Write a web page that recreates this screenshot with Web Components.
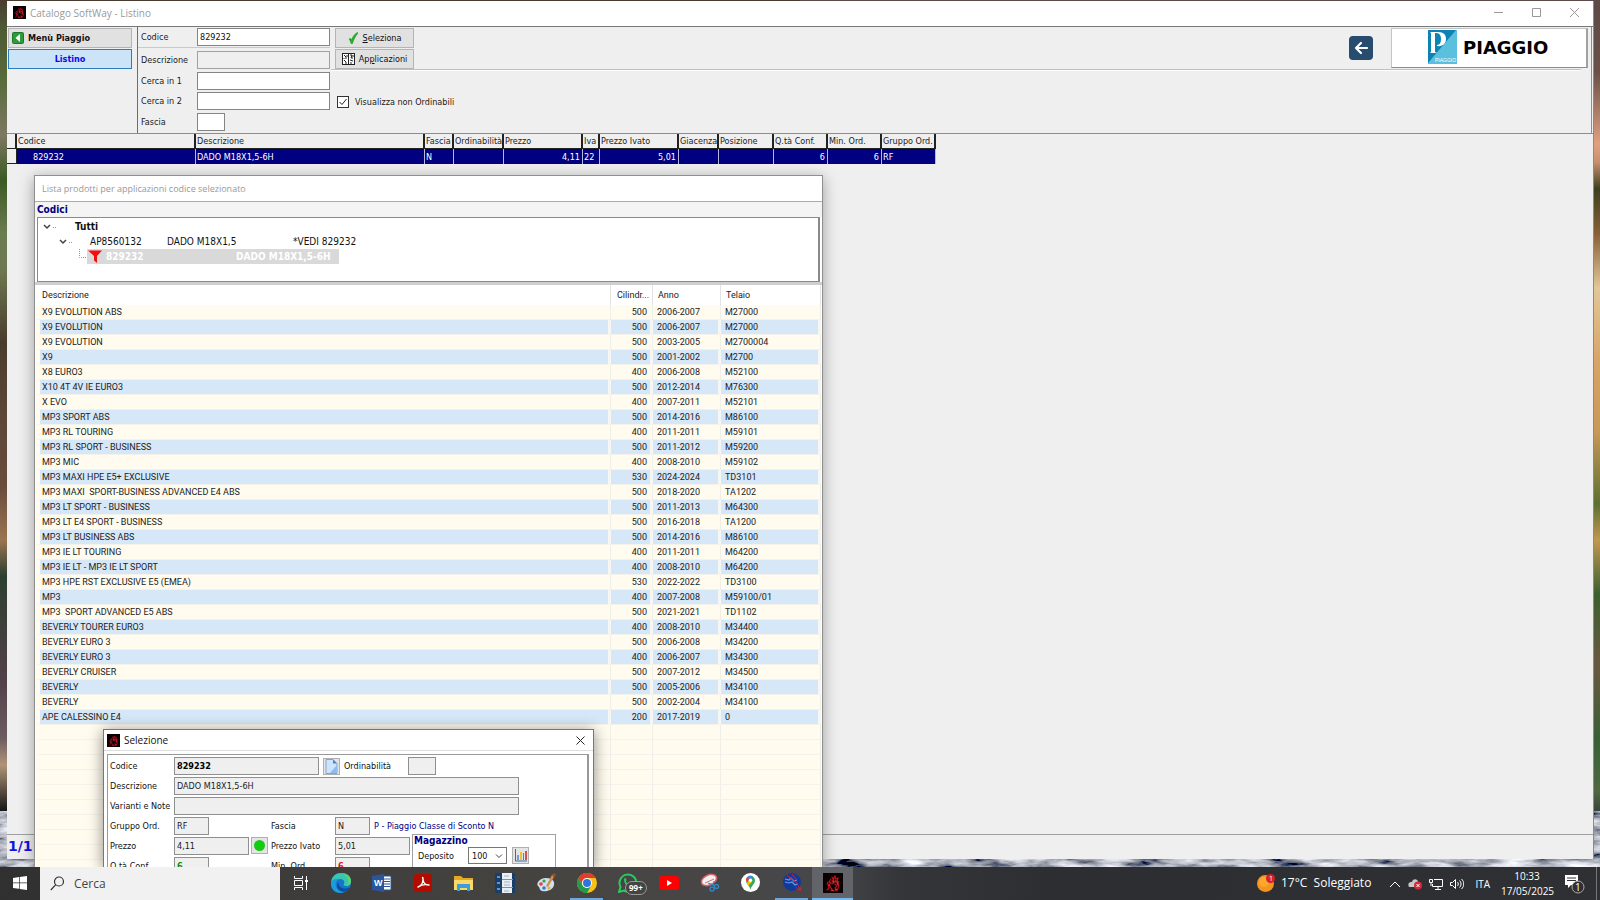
<!DOCTYPE html>
<html lang="it">
<head>
<meta charset="utf-8">
<title>Catalogo SoftWay - Listino</title>
<style>
  html, body { height: 100%; margin: 0; }
  body { overflow: hidden; }
</style>
</head>
<body>
<desk-top></desk-top>

<script>
const define = (name, markup, setup) => {
  const template = document.createElement('template');
  template.innerHTML = markup;
  customElements.define(name, class extends HTMLElement {
    constructor() {
      super();
      const root = this.attachShadow({ mode: 'open' });
      root.append(template.content.cloneNode(true));
      if (setup) setup(root, this);
    }
  });
};

/* Red flame emblem of the program */
define('app-emblem', `
<style>
  :host { display: block; width: 13px; height: 13px; flex: none; }
  svg { display: block; width: 100%; height: 100%; }
</style>
<svg viewBox="0 0 20 20" fill="none" stroke="#c8141c" stroke-width="1.100" stroke-linecap="round">
  <rect width="20" height="20" fill="#080002" stroke="none"/>
  <path d="M9 4l1 2 2-3 1 3 2-1-1 3 2 1M8 6l-2 3 2 1-3 2 1 3-2 2M12 7l3 3 1 4-2 3M9 8l2 1-2 2M12 11l2 2-2 2 1 3M7 14l2 2-1 2M5 9l-1 2M11 5l-1 3 3 1"/>
  <path d="M10 8l1 2M14 9l1 3M6 12l1 1M13 16l1 1M9 17l2 1" stroke="#ee3030"/>
</svg>`);

/* ---------- Menu column, search form and logo ---------- */
define('tool-bar', `
<style>
  :host { display: flex; height: 106px; flex: none; border-bottom: 1px solid #8c8c8c; font-size: 9px; }
  nav { width: 131px; flex: none; border-right: 1px solid #6d6d6d; padding: 1px 5px 0 1px; box-sizing: border-box; display: flex; flex-direction: column; gap: 1px; }
  button { font: inherit; color: #111; background: #e1e1e1; border: 1px solid #b4b4b4; padding: 0; height: 20px; box-sizing: border-box; display: flex; align-items: center; }
  nav button { font-weight: bold; }
  .back { padding-left: 3px; gap: 4px; }
  .now { justify-content: center; background: #cce4f7; border-color: #2c7cc0; color: #0a0af0; }
  .main { flex: 1; display: flex; margin-right: 1px; border-right: 1px solid #8c8c8c; }
  .fields { width: 193px; box-sizing: border-box; flex: none; display: grid; grid-template-columns: 56px 133px; grid-template-rows: 21px 24px 18px 22px 20px; padding-left: 3px; align-items: center; }
  .code { grid-column: 1 / -1; display: grid; grid-template-columns: subgrid; align-items: center; height: 21px; border-bottom: 1px solid #c9c9c9; margin-left: -3px; padding-left: 3px; box-sizing: border-box; }
  label { white-space: nowrap; }
  input[type=text] { font: inherit; color: #111; width: 100%; height: 18px; box-sizing: border-box; border: 1px solid #858585; background: #fff; padding: 0 2px; outline: 0; }
  input[type=text][readonly] { background: #efefef; border-color: #a0a0a0; }
  input[type=text].small { width: 28px; }
  .right { flex: 1; display: flex; flex-direction: column; min-width: 0; }
  .top { height: 43px; box-sizing: border-box; display: flex; margin-right: 10px; border-bottom: 1px solid #c0c0c0; box-shadow: 0 1px #fff; }
  .acts { display: flex; flex-direction: column; gap: 1px; padding: 1px 0 0 4px; }
  .acts button { width: 79px; justify-content: center; gap: 4px; }
  .grow { flex: 1; }
  .exit { align-self: center; width: 24px; height: 24px; background: #284c6e; border: 0; border-radius: 4px; justify-content: center; margin-right: 18px; }
  .logo { width: 197px; height: 40px; flex: none; margin: 1px -7px 0 0; box-sizing: border-box; background: #fff; border: 1px solid #c4c4c4; border-right: 2px solid #a0a0a0; border-bottom-color: #8c8c8c; display: flex; align-items: center; gap: 6px; padding-left: 36px; padding-bottom: 2px; font-size: 18px; font-weight: bold; font-family: "DejaVu Sans", sans-serif; color: #000; }
  .chk { display: flex; align-items: center; gap: 6px; padding: 26px 0 0 6px; }
  .chk input { appearance: none; width: 12px; height: 12px; margin: 0; border: 1px solid #333; background: #fff url('data:image/svg+xml,<svg xmlns="http://www.w3.org/2000/svg" viewBox="0 0 10 10"><path d="M1.5 5l2.500 2.500 4.500-5.500" fill="none" stroke="%23222"/></svg>'); box-sizing: border-box; }
  svg { display: block; flex: none; }
</style>
<nav>
  <button class="back"><svg width="12" height="12" viewBox="0 0 12 12"><rect x=".5" y=".5" width="11" height="11" rx="1" fill="#2f9a3b" stroke="#1b7a2a"/><path d="M8 2v8L3.500 6z" fill="#fff"/></svg>Menù Piaggio</button>
  <button class="now">Listino</button>
</nav>
<div class="main">
  <div class="fields">
    <div class="code"><label for="cod">Codice</label><input type="text" id="cod" value="829232"></div>
    <label for="des">Descrizione</label><input type="text" id="des" readonly>
    <label for="c1">Cerca in 1</label><input type="text" id="c1">
    <label for="c2">Cerca in 2</label><input type="text" id="c2">
    <label for="fas">Fascia</label><input type="text" id="fas" class="small">
  </div>
  <div class="right">
    <div class="top">
      <div class="acts">
        <button><svg width="11" height="12" viewBox="0 0 11 12"><path d="M1 7c1-1 2-.5 2.500 1C5 4 7 1.500 9.500.500L10 1C7.500 4 5.500 8 4.500 11.500H3C2.500 9.500 2 8 1 7z" fill="#22b422" stroke="#118a11" stroke-width=".5"/></svg><span><u>S</u>eleziona</span></button>
        <button><svg width="13" height="12" viewBox="0 0 13 12"><rect x=".5" y=".5" width="12" height="11" fill="#fff" stroke="#222"/><path d="M6.500 0v12M2 2l2 2M3 5h2M2 7l2 2M5 2v2M8 2h2l-1 3h2M8 7l3 1M9 9v2M3 10h2M11 2v2M2 5v1" stroke="#222" fill="none"/></svg><span>Ap<u>p</u>licazioni</span></button>
      </div>
      <div class="grow"></div>
      <button class="exit" aria-label="Indietro"><svg width="16" height="16" viewBox="0 0 16 16"><path d="M14 8H3M8 3L3 8l5 5" fill="none" stroke="#fff" stroke-width="2.200" stroke-linecap="round" stroke-linejoin="round"/></svg></button>
      <div class="logo">
        <svg width="29" height="34" viewBox="0 0 29 34"><path d="M0 0h29v34H0z" fill="#5bc0de"/><path d="M0 0h28L0 33z" fill="#0b83b5"/><path d="M2 2h8c6 0 8 3 8 7s-3 8-9 7v-1c3 0 4-3 4-6s-1-6-5-6H7v19l2 1H2l1-1V3z" fill="#fff"/><text x="7" y="32" font-family="Liberation Sans, sans-serif" font-size="5" font-weight="normal" fill="#fff">PIAGGIO</text></svg>
        <span>PIAGGIO</span>
      </div>
    </div>
    <label class="chk"><input type="checkbox" checked>Visualizza non Ordinabili</label>
  </div>
</div>`);

/* ---------- Price list ---------- */
define('price-list', `
<style>
  :host { display: block; font-size: 9px; }
  table { border-collapse: separate; border-spacing: 0; table-layout: fixed; width: 929px; }
  th, td { height: 15px; padding: 0 2px 0 1px; box-sizing: border-box; font-weight: normal; text-align: left; white-space: nowrap; overflow: hidden; line-height: 14px; }
  th { border-right: 2px solid #222; border-bottom: 1px solid #222; color: #222; padding-top: 1px; line-height: 13px; }
  td { background: #000080; color: #fff; border-right: 1px solid #b8b8dc; }
  td.mark { background: #efefef; border-right: 1px solid #222; border-bottom: 1px solid #222; }
  td.first { padding-left: 16px; }
  .n { text-align: right; }
</style>
<table>
  <colgroup><col style="width:10px"><col style="width:179px"><col style="width:229px"><col style="width:29px"><col style="width:50px"><col style="width:79px"><col style="width:17px"><col style="width:79px"><col style="width:40px"><col style="width:55px"><col style="width:54px"><col style="width:54px"><col style="width:54px"></colgroup>
  <tr><th></th><th>Codice</th><th>Descrizione</th><th>Fascia</th><th>Ordinabilità</th><th>Prezzo</th><th>Iva</th><th>Prezzo Ivato</th><th>Giacenza</th><th>Posizione</th><th>Q.tà Conf.</th><th>Min. Ord.</th><th>Gruppo Ord.</th></tr>
  <tr><td class="mark"></td><td class="first">829232</td><td>DADO M18X1,5-6H</td><td>N</td><td></td><td class="n">4,11</td><td>22</td><td class="n">5,01</td><td></td><td></td><td class="n">6</td><td class="n">6</td><td>RF</td></tr>
</table>`);

define('catalog-window', `
<style>
  :host { display: flex; flex-direction: column; background: #efefef; border-right: 1px solid #8a8a8a; box-sizing: border-box; color: #1a1a1a; font-family: "DejaVu Sans Condensed", "DejaVu Sans", sans-serif; }
  header { height: 26px; box-sizing: border-box; flex: none; background: #fff; border-bottom: 1px solid #777; display: flex; align-items: center; gap: 4px; padding: 0 0 2px 6px; font: 10px "Open Sans", sans-serif; color: #9a9a9a; }
  h1 { font: inherit; margin: 0; flex: 1; }
  .caps { display: flex; gap: 27px; padding-right: 13px; }
  .caps button { border: 0; background: none; padding: 0; width: 11px; height: 11px; }
  svg { display: block; }
  .rest { flex: 1; }
  footer { height: 25px; box-sizing: border-box; border-top: 1px solid #a0a0a0; color: #1414dc; font: bold 14px/22px "DejaVu Sans", sans-serif; padding-left: 1px; }
</style>
<header><app-emblem></app-emblem><h1>Catalogo SoftWay - Listino</h1>
  <div class="caps">
    <button aria-label="Riduci"><svg width="11" height="11"><path d="M1 5.500h9" stroke="#999"/></svg></button>
    <button aria-label="Ingrandisci"><svg width="11" height="11"><path d="M1.500 1.500h8v8h-8z" stroke="#999" fill="none"/></svg></button>
    <button aria-label="Chiudi"><svg width="11" height="11"><path d="M1 1l9 9M10 1l-9 9" stroke="#999"/></svg></button>
  </div>
</header>
<tool-bar></tool-bar>
<price-list></price-list>
<div class="rest"></div>
<footer>1/1</footer>`);

/* ---------- Code tree ---------- */
define('code-tree', `
<style>
  :host { display: block; box-sizing: border-box; height: 65px; margin: 0 2px 0 2px; background: #fff; border: 1px solid #8a8a8a; border-right-width: 2px; font-size: 10px; color: #111; }
  .row { display: flex; align-items: center; height: 15px; line-height: 15px; white-space: nowrap; }
  .one { padding-left: 4px; gap: 17px; margin-top: 1px; }
  .two { padding-left: 20px; gap: 16px; }
  .three { padding-left: 41px; }
  b { font-weight: bold; }
  .cols { display: grid; grid-template-columns: 77px 126px auto; }
  .sel { background: #d9d9d9; color: #fff; font-weight: bold; width: 252px; display: grid; grid-template-columns: 19px 130px auto; align-items: center; }
  svg { display: block; flex: none; }
</style>
<div class="row one"><svg width="16" height="10"><path d="M2 3l3 3 3-3" stroke="#444" stroke-width="1.500" fill="none"/><path d="M11 5.500h4" stroke="#999" stroke-dasharray="1 1"/></svg><b>Tutti</b></div>
<div class="row two"><svg width="16" height="10"><path d="M2 3l3 3 3-3" stroke="#444" stroke-width="1.500" fill="none"/><path d="M11 5.500h3" stroke="#999" stroke-dasharray="1 1"/></svg><div class="cols"><span>AP8560132</span><span>DADO M18X1,5</span><span>*VEDI 829232</span></div></div>
<div class="row three"><svg width="8" height="15"><path d="M.5 0v8.500h8" stroke="#999" fill="none" stroke-dasharray="1 1"/></svg><div class="sel"><svg width="15" height="15" viewBox="0 0 15 15"><path d="M1 1.500h14L10 7v7L7 11.500V7z" fill="#f01010"/></svg><span>829232</span><span>DADO M18X1,5-6H</span></div></div>`);

/* ---------- Vehicles that use the selected code ---------- */
const vehicles = [
  ['X9 EVOLUTION ABS','500','2006-2007','M27000'],
  ['X9 EVOLUTION','500','2006-2007','M27000'],
  ['X9 EVOLUTION','500','2003-2005','M2700004'],
  ['X9','500','2001-2002','M2700'],
  ['X8 EURO3','400','2006-2008','M52100'],
  ['X10 4T 4V IE EURO3','500','2012-2014','M76300'],
  ['X EVO','400','2007-2011','M52101'],
  ['MP3 SPORT ABS','500','2014-2016','M86100'],
  ['MP3 RL TOURING','400','2011-2011','M59101'],
  ['MP3 RL SPORT - BUSINESS','500','2011-2012','M59200'],
  ['MP3 MIC','400','2008-2010','M59102'],
  ['MP3 MAXI HPE E5+ EXCLUSIVE','530','2024-2024','TD3101'],
  ['MP3 MAXI  SPORT-BUSINESS ADVANCED E4 ABS','500','2018-2020','TA1202'],
  ['MP3 LT SPORT - BUSINESS','500','2011-2013','M64300'],
  ['MP3 LT E4 SPORT - BUSINESS','500','2016-2018','TA1200'],
  ['MP3 LT BUSINESS ABS','500','2014-2016','M86100'],
  ['MP3 IE LT TOURING','400','2011-2011','M64200'],
  ['MP3 IE LT - MP3 IE LT SPORT','400','2008-2010','M64200'],
  ['MP3 HPE RST EXCLUSIVE E5 (EMEA)','530','2022-2022','TD3100'],
  ['MP3','400','2007-2008','M59100/01'],
  ['MP3  SPORT ADVANCED E5 ABS','500','2021-2021','TD1102'],
  ['BEVERLY TOURER EURO3','400','2008-2010','M34400'],
  ['BEVERLY EURO 3','500','2006-2008','M34200'],
  ['BEVERLY EURO 3','400','2006-2007','M34300'],
  ['BEVERLY CRUISER','500','2007-2012','M34500'],
  ['BEVERLY','500','2005-2006','M34100'],
  ['BEVERLY','500','2002-2004','M34100'],
  ['APE CALESSINO E4','200','2017-2019','0'],
];

define('vehicle-table', `
<style>
  :host { display: block; background: #fffbef; font: 9px Roboto, sans-serif; color: #222; overflow: hidden; }
  table { width: 100%; table-layout: fixed; border-collapse: separate; border-spacing: 0; }
  th { height: 20px; background: #fff; font-weight: normal; text-align: left; padding: 0 0 0 5px; border-right: 1px solid #e2e2e2; }
  td { height: 15px; box-sizing: border-box; padding: 0 0 0 4px; white-space: pre; border-right: 1px solid #efefe8; border-bottom: 1px solid #f4f2ea; background-clip: padding-box; line-height: 14px; }
  th:first-child { padding-left: 6px; }
  td:first-child { padding-left: 2px; border-left: 4px solid #fffbef; }
  td:nth-child(2) { text-align: right; padding-right: 5px; }
  th:nth-child(2) { padding-left: 6px; }
  tr.alt td { background: #d6e7f7; border-right: 3px solid #f6f7f2; }
  tr.alt td:nth-child(2) { padding-right: 3px; }
</style>
<table>
  <colgroup><col><col style="width:42px"><col style="width:68px"><col style="width:100px"></colgroup>
  <thead><tr><th>Descrizione</th><th>Cilindr...</th><th>Anno</th><th>Telaio</th></tr></thead>
  <tbody></tbody>
</table>`, root => {
  const body = root.querySelector('tbody');
  const addRow = (cells, alt) => {
    const tr = body.insertRow();
    if (alt) tr.className = 'alt';
    cells.forEach(text => { tr.insertCell().textContent = text; });
  };
  vehicles.forEach((v, i) => addRow(v, i % 2 === 1));
  for (let i = 0; i < 10; i++) addRow(['', '', '', ''], false);
});

define('applications-window', `
<style>
  :host { display: flex; flex-direction: column; background: #fff; border: 1px solid #8f8f8f; border-bottom: 0; box-sizing: border-box; box-shadow: 0 3px 14px rgba(0,0,0,.35); color: #1a1a1a; font-family: "DejaVu Sans Condensed", "DejaVu Sans", sans-serif; }
  h2 { margin: 0; height: 25px; padding-left: 7px; font: 9px/25px "Open Sans", sans-serif; color: #999; flex: none; border-bottom: 1px solid #aaa; }
  h3 { margin: 0; background: #f4f4f4; color: #000080; font-size: 10px; line-height: 16px; height: 15px; padding-left: 2px; flex: none; }
  .split { height: 3px; flex: none; background: #cfcfcf; }
  vehicle-table { flex: 1; min-height: 0; margin-left: 1px; margin-right: 1px; }
</style>
<h2>Lista prodotti per applicazioni codice selezionato</h2>
<h3>Codici</h3>
<code-tree></code-tree>
<div class="split"></div>
<vehicle-table></vehicle-table>`);

/* ---------- Selection dialog ---------- */
define('selection-dialog', `
<style>
  :host { display: flex; flex-direction: column; background: #fff; border: 1px solid #777; border-bottom: 0; box-sizing: border-box; overflow: hidden; box-shadow: 0 2px 14px rgba(0,0,0,.45); color: #111; font: 9px "DejaVu Sans Condensed", "DejaVu Sans", sans-serif; }
  header { height: 21px; box-sizing: border-box; flex: none; display: flex; align-items: center; gap: 4px; padding: 0 8px 0 3px; border-bottom: 1px solid #ddd; }
  h2 { flex: 1; margin: 0; font: 10px "Open Sans", sans-serif; }
  button { padding: 0; border: 1px solid #b0b0b0; background: #e4e4e4; display: flex; align-items: center; justify-content: center; width: 17px; height: 17px; box-sizing: border-box; }
  header button { border: 0; background: none; width: 9px; height: 9px; }
  .body { flex: 1; min-height: 0; margin: 3px 4px 0 3px; border: 1px solid #999; border-bottom: 0; border-right-width: 2px; padding: 2px 0 0 2px; overflow: hidden; display: flex; flex-direction: column; gap: 2px; }
  .row { display: flex; align-items: center; height: 18px; flex: none; }
  label, .cell { white-space: nowrap; flex: none; }
  .row > label:first-child { width: 64px; }
  input { font: inherit; color: #222; border: 1px solid #8f8f8f; background: #efefef; height: 18px; padding: 0 2px; box-sizing: border-box; margin: 0; }
  .w144 { width: 145px; font-weight: bold; color: #000; }
  .wide { width: 345px; }
  .w34 { width: 35px; }
  .w74 { width: 75px; }
  .w28 { width: 28px; }
  .doc { margin: 0 4px; }
  .ord { width: 64px; }
  .pair { display: grid; grid-template-columns: 97px 64px auto; align-items: center; }
  .pr { display: flex; gap: 2px; }
  .klass { color: #000080; margin-left: 4px; }
  .green { color: #0a8a0a; font-weight: bold; }
  .red { color: #e01010; font-weight: bold; }
  .low { display: flex; align-items: flex-start; }
  .lines { display: flex; flex-direction: column; gap: 2px; }
  fieldset { margin: -3px 0 0 2px; min-width: 0; border: 1px solid #a0a0a0; border-bottom: 0; padding: 0; width: 144px; height: 60px; box-sizing: border-box; }
  .mag { color: #000080; font-weight: bold; font-size: 10px; line-height: 12px; padding-left: 1px; }
  .dep { display: flex; align-items: center; padding-left: 5px; }
  .dep label { width: 50px; }
  select { appearance: none; font: inherit; color: #111; width: 39px; height: 17px; border: 1px solid #777; border-radius: 0; padding: 0 0 0 3px; margin-right: 5px; background: #fff url('data:image/svg+xml,<svg xmlns="http://www.w3.org/2000/svg" viewBox="0 0 8 8"><path d="M1 2.500l3 3 3-3" fill="none" stroke="%23444"/></svg>') no-repeat right 3px center / 8px 8px; }
  svg { display: block; }
</style>
<header><app-emblem></app-emblem><h2>Selezione</h2><button aria-label="Chiudi"><svg width="9" height="9"><path d="M.5.500l8 8M8.500.500l-8 8" stroke="#222"/></svg></button></header>
<div class="body">
  <div class="row"><label for="a">Codice</label><input id="a" class="w144" value="829232" readonly><button class="doc" aria-label="Documento"><svg width="15" height="15" viewBox="0 0 15 15"><path d="M2 .5h7l4 4v10H2z" fill="#cfe4fa" stroke="#7fa6d6"/><path d="M9 .5v4h4z" fill="#3f87d4"/><path d="M6 14l7-8v8z" fill="#8dbcf0"/></svg></button><label for="b" class="ord">Ordinabilità</label><input id="b" class="w28" readonly></div>
  <div class="row"><label for="c">Descrizione</label><input id="c" class="wide" value="DADO M18X1,5-6H" readonly></div>
  <div class="row"><label for="d">Varianti e Note</label><input id="d" class="wide" readonly></div>
  <div class="row"><label for="e">Gruppo Ord.</label><div class="pair"><input id="e" class="w34" value="RF" readonly><label for="f">Fascia</label><input id="f" class="w34" value="N" readonly></div><span class="cell klass">P - Piaggio Classe di Sconto N</span></div>
  <div class="low">
    <div class="lines">
      <div class="row"><label for="g">Prezzo</label><div class="pair"><div class="pr"><input id="g" class="w74" value="4,11" readonly><button aria-label="Stato"><svg width="13" height="13"><circle cx="6.500" cy="6.500" r="5.500" fill="#12cc12"/></svg></button></div><label for="h">Prezzo Ivato</label><input id="h" class="w74" value="5,01" readonly></div></div>
      <div class="row"><label for="i">Q.tà Conf.</label><div class="pair"><input id="i" class="w34 green" value="6" readonly><label for="j">Min. Ord.</label><input id="j" class="w34 red" value="6" readonly></div></div>
    </div>
    <fieldset aria-label="Magazzino">
      <div class="mag">Magazzino</div>
      <div class="dep"><label for="k">Deposito</label><select id="k"><option>100</option></select><button aria-label="Grafico"><svg width="13" height="13" viewBox="0 0 13 13"><path d="M1.500 0v12H13" stroke="#356db5" fill="none"/><path d="M3 6h2v5H3z" fill="#6a9ee0"/><path d="M6 3h2v8H6z" fill="#f0c030"/><path d="M9 4h1v7H9zM11 2h2v9h-2z" fill="#d65050"/></svg></button></div>
    </fieldset>
  </div>
</div>`);

/* ---------- Task bar ---------- */
define('task-bar', `
<style>
  :host { display: flex; background: linear-gradient(90deg, #303030 0, #3d3c3a 18%, #474542 36%, #47474a 52%, #34363a 56%, #2d2e32 66%, #2f3034 100%); color: #fff; font: 12px "Open Sans", sans-serif; }
  button { padding: 0; border: 0; border-bottom: 2px solid transparent; background: none; color: inherit; font: inherit; display: flex; align-items: center; justify-content: center; flex: none; height: 33px; box-sizing: border-box; position: relative; }
  svg { display: block; flex: none; }
  .start { width: 40px; }
  .find { width: 240px; flex: none; background: #f1f1f1; display: flex; align-items: center; gap: 9px; padding-left: 10px; box-sizing: border-box; color: #444; }
  .find input { flex: 1; min-width: 0; border: 0; padding: 0; background: none; font: inherit; color: #444; outline: 0; }
  .find input::placeholder { color: #444; opacity: 1; }
  .apps { display: flex; }
  .apps button { width: 41px; }
  .apps button:first-child { width: 40px; }
  .apps .run::after { content: ""; position: absolute; left: 4px; right: 4px; bottom: -2px; height: 2px; background: #6fa8dc; }
  .apps .on { background: #63646a; border-bottom-color: #76b9ed; }
  .apps .on app-emblem { width: 20px; height: 20px; }
  .badge { position: absolute; left: 18px; top: 14px; font-size: 8px; line-height: 12px; padding: 0 3px; background: #444; border: 1px solid #999; border-radius: 7px; font-weight: bold; }
  .grow { flex: 1; }
  .tray { display: flex; align-items: center; }
  .weather { gap: 6px; margin-right: 18px; white-space: pre; }
  .icons { display: flex; align-items: center; gap: 7px; margin-right: 11px; }
  .lang { font-size: 10px; margin-right: 11px; }
  .clock { font-size: 10px; line-height: 15px; text-align: center; width: 52px; margin-right: 11px; }
  .notes { width: 22px; margin-right: 10px; }
  .peek { width: 1px; margin-right: 3px; background: #777; align-self: stretch; }
</style>
<button class="start" aria-label="Start"><svg width="14" height="14" viewBox="0 0 14 14" fill="#fff"><path d="M0 2l6-.9v5.500H0zM6.700 1L14 0v6.600H6.700zM0 7.300h6v5.500L0 12zM6.700 7.300H14V14l-7.300-1z"/></svg></button>
<label class="find"><svg width="15" height="15" viewBox="0 0 15 15" fill="none" stroke="#333" stroke-width="1.200"><circle cx="9" cy="5.500" r="4.500"/><path d="M5.800 8.700L.8 14"/></svg><input type="search" placeholder="Cerca" aria-label="Cerca"></label>
<div class="apps">
  <button aria-label="Visualizzazione attività"><svg width="15" height="14" viewBox="0 0 15 14" fill="none" stroke="#fff"><path d="M1.500 4.500h8v5h-8zM1.500 0v2.500h8V0M1.500 14v-2.500h8V14M13.500 0v14"/><path d="M12 4h3v2h-3z" fill="#fff" stroke="none"/></svg></button>
  <button aria-label="Edge"><svg width="20" height="20" viewBox="0 0 20 20"><circle cx="10" cy="10" r="10" fill="#1577c8"/><path d="M0 9C1 3 5 0 10 0c6 0 10 4 10 8 0 3-2 5-5 5-2 0-3-1-2-2 1-2 0-5-4-5-3 0-7 1-9 3z" fill="#38c6b4"/><path d="M0 9c2-3 6-4 9-3-4 1-5 4-4 7 1 4 5 6 8 6-7 3-14-2-13-10z" fill="#1a9de0"/><path d="M8 9c-1 4 3 8 9 6 1 0 2-.6 1.500.500C14 21 6 18 6 13c0-2 1-3 2-4z" fill="#0d4f9e"/><path d="M11 0c6 0 9 4 9 8 0 3-2 5-5 5 4-3 3-9-4-13z" fill="#6bd95b" opacity=".7"/></svg></button>
  <button aria-label="Word"><svg width="20" height="18" viewBox="0 0 20 18"><path d="M11 2h8v14h-8z" fill="#fff" stroke="#2b579a"/><path d="M12 5h6M12 7.500h6M12 10h6M12 12.500h6" stroke="#2b579a"/><path d="M0 2l12-2v18L0 16z" fill="#2b579a"/><text x="2" y="12" font-size="9" font-weight="bold" fill="#fff" font-family="Liberation Sans, sans-serif">W</text></svg></button>
  <button aria-label="Acrobat"><svg width="18" height="18" viewBox="0 0 18 18"><rect width="18" height="18" rx="3" fill="#b30b00"/><path d="M4 13c3-1 5-4 5-8 0-2-1-2 0 0 0 4 3 6 6 6-3-1-8 0-11 2z" fill="none" stroke="#fff" stroke-width="1.400" stroke-linejoin="round"/></svg></button>
  <button aria-label="Esplora file"><svg width="19" height="16" viewBox="0 0 19 16"><path d="M0 1h7l2 2h10v12H0z" fill="#e5a823"/><path d="M0 5h19v10H0z" fill="#fbd968"/><path d="M3 9h13v7h-3v-3H6v3H3z" fill="#3a9fdc"/></svg></button>
  <button aria-label="Gestionale"><svg width="20" height="20" viewBox="0 0 20 20"><path d="M0 0h20v20H0z" fill="#183f6a"/><path d="M7 0h10v20H7z" fill="#e8eef4"/><path d="M9 3h5M9 9h6M9 12h6M9 18h5" stroke="#a4b4c4"/><path d="M2 4h3M2 10h3M2 16h3" stroke="#86b0dc" stroke-width="1.500"/><path d="M7 6.500h11M7 14.500h11" stroke="#7890a8"/></svg></button>
  <button aria-label="Paint"><svg width="20" height="20" viewBox="0 0 20 20"><path d="M10 5c6 0 9 3 8 7-1 5-7 7-12 6-3-1-2-4-4-5-2-2 1-8 8-8z" fill="#cfe0ee"/><circle cx="5" cy="11" r="1.800" fill="#e04040"/><circle cx="8" cy="8" r="1.600" fill="#3aa040"/><circle cx="8" cy="15" r="1.800" fill="#3a78d0"/><circle cx="13" cy="15" r="1.600" fill="#e8b820"/><path d="M10 13l6-11 3-1-1 3-6 10z" fill="#d98c4a"/><path d="M16 2l2-2 2 2-2 3z" fill="#8a5630"/></svg></button>
  <button class="run" aria-label="Chrome"><svg width="20" height="20" viewBox="0 0 20 20"><circle cx="10" cy="10" r="10" fill="#fbc116"/><path d="M1.300 5A10 10 0 0 1 18.700 5H10a5 5 0 0 0-4.300 7.500z" fill="#e33b2e"/><path d="M1.300 5A10 10 0 0 0 10 20l4.300-7.500a5 5 0 0 1-8.600 0z" fill="#229a4c"/><circle cx="10" cy="10" r="5" fill="#fff"/><circle cx="10" cy="10" r="4" fill="#2f73e0"/></svg></button>
  <button aria-label="WhatsApp"><svg width="20" height="20" viewBox="0 0 20 20"><path d="M1 19l1.500-5A8.500 8.500 0 1 1 6 17.500z" fill="none" stroke="#2cc864" stroke-width="2"/><path d="M6 6c1-2 2-1 2.500 1L8 8.500c1 2 2 3 4 3.500l1-1 2.500 1c0 2-2 3-4 2C8 13 6 10 6 6z" fill="#2cc864"/></svg><span class="badge">99+</span></button>
  <button aria-label="YouTube"><svg width="20" height="14" viewBox="0 0 20 14"><rect width="20" height="14" rx="3" fill="#f00"/><path d="M8 4v6l5-3z" fill="#fff"/></svg></button>
  <button aria-label="Strumento di cattura"><svg width="20" height="20" viewBox="0 0 20 20"><ellipse cx="9" cy="7" rx="8" ry="5" transform="rotate(-25 9 7)" fill="#f6eeee" stroke="#d8606a" stroke-width="1.500"/><path d="M5 10l9-4" stroke="#b08088"/><path d="M8 10l6 2M14 8l-1 5" stroke="#3a8ac0"/><circle cx="12" cy="16" r="2" fill="none" stroke="#2f86c8" stroke-width="1.500"/><circle cx="16.500" cy="13.500" r="2" fill="none" stroke="#2f86c8" stroke-width="1.500"/></svg></button>
  <button aria-label="Maps"><svg width="19" height="19" viewBox="0 0 19 19"><circle cx="9.500" cy="9.500" r="9.500" fill="#fff"/><path d="M9.500 17C9 13 5 11 5 7.500a4.500 4.500 0 0 1 9 0C14 11 10 13 9.500 17z" fill="#34a853"/><path d="M5 8a4.500 4.500 0 0 1 1-4l3.500 3z" fill="#ea4335"/><path d="M6 4a4.500 4.500 0 0 1 6-.5L9.500 7z" fill="#4285f4"/><path d="M6 10l3-4 2 3-4 4z" fill="#fbbc04"/><circle cx="9.500" cy="7.300" r="1.700" fill="#fff"/></svg></button>
  <button class="run" aria-label="SoftWay"><svg width="20" height="20" viewBox="0 0 20 20"><circle cx="10" cy="9" r="9" fill="#14399c"/><path d="M3 6l4 1 2-2 3 3 3-1M3 9l4 1 3-1 3 3 3-1" stroke="#5c9ce8" fill="none" stroke-width="1.200"/><path d="M5 2l3 3 4 2 4 5 2 5M10 1l4 5M14 14l2 3h3l-1-3" stroke="#d0203c" fill="none"/></svg></button>
  <button class="on" aria-label="Catalogo SoftWay"><app-emblem></app-emblem></button>
</div>
<div class="grow"></div>
<div class="tray">
  <button class="weather"><svg width="18" height="18" viewBox="0 0 18 18"><circle cx="8.500" cy="9.500" r="8.500" fill="#f7941d"/><circle cx="7" cy="8" r="5" fill="#fba82c"/><circle cx="13.500" cy="4.500" r="4.500" fill="#d62222"/><text x="12" y="7" font-size="7" fill="#fff" font-family="Open Sans, sans-serif">1</text></svg><span>17°C  Soleggiato</span></button>
  <div class="icons">
    <svg width="12" height="8"><path d="M1 7l5-5 5 5" fill="none" stroke="#fff"/></svg>
    <svg width="14" height="12" viewBox="0 0 14 12"><path d="M1 9c-2-4 1-5 3-5 1-4 6-3 6 0l-2 5z" fill="#c8c8c8"/><circle cx="10" cy="7.500" r="4" fill="#d6283a"/><path d="M8.500 6l3 3M11.500 6l-3 3" stroke="#fff"/></svg>
    <svg width="14" height="12" viewBox="0 0 14 12" fill="none" stroke="#fff"><path d="M5 1.500h8.500v7h-10V6M6 11.500h6M9 9v2M.5 1.500h3v3h-3zM2 5v3"/></svg>
    <svg width="14" height="12" viewBox="0 0 14 12" fill="none" stroke="#fff"><path d="M.5 4.500h2l3-3v9l-3-3h-2zM7.500 4c1 1 1 3 0 4M9.500 2.500c2 2 2 5 0 7M11.500 1c3 3 3 7 0 10"/></svg>
  </div>
  <span class="lang">ITA</span>
  <div class="clock">10:33<br>17/05/2025</div>
  <button class="notes" aria-label="Notifiche"><svg width="22" height="22" viewBox="0 0 22 22"><path d="M1 3h13v10H7l-3 3v-3H1z" fill="#fff"/><path d="M3 6h9M3 8.500h9" stroke="#333"/><circle cx="14" cy="15" r="6" fill="#2f3034" stroke="#aaa"/><text x="11" y="19" font-size="10" fill="#fff" font-family="Open Sans, sans-serif">1</text></svg></button>
  <div class="peek"></div>
</div>`);

define('desk-top', `
<style>
  :host { display: flex; flex-direction: column; height: 100%; position: relative; overflow: hidden; }
  .wall { position: absolute; inset: 0; background:
    linear-gradient(#4a3c30 0, #4d5a34 3%, #586c3c 9%, #7c7862 15%, #3c5a24 20%, #6a7c50 26%, #6e7850 30%, #4a3c2c 38%, #5c4636 46%, #6a4c3c 54%, #9a7450 60%, #2c4030 64%, #54404a 76%, #6c5c60 82%, #b09478 85%, #181818 90%, #3c3c44 100%) left / 50% 100% no-repeat,
    linear-gradient(#5c4a48 0, #6a5048 8%, #e0a080 16%, #c89070 18%, #3c4020 21%, #8a6038 26%, #e0c898 32%, #d8a468 40%, #c89858 48%, #5c7030 56%, #c09850 60%, #3c6030 66%, #6a5840 74%, #386038 82%, #506840 88%, #30343c 91%, #60687c 100%) right / 50% 100% no-repeat; }
  .rock { position: absolute; inset: auto 0 33px 0; width: 100%; height: 56px; }
  .space { flex: 1; min-height: 0; padding: 1px 6px 8px 7px; display: flex; position: relative; overflow: hidden; }
  catalog-window { flex: 1; min-width: 0; }
  applications-window { position: absolute; left: 34px; top: 175px; width: 789px; bottom: 0; }
  selection-dialog { position: absolute; left: 103px; top: 729px; width: 491px; bottom: 0; }
  task-bar { height: 33px; flex: none; position: relative; }
</style>
<div class="wall"></div>
<svg class="rock" preserveAspectRatio="none"><filter id="f" x="0" y="0" width="100%" height="100%"><feTurbulence type="fractalNoise" baseFrequency=".03 .12" numOctaves="4" seed="7"/><feColorMatrix values="1.700 0 0 0 -.42  1.700 0 0 0 -.4  1.700 0 0 0 -.34  0 0 0 0 1"/></filter><rect width="100%" height="100%" filter="url(#f)"/></svg>
<div class="space">
  <catalog-window></catalog-window>
  <applications-window></applications-window>
  <selection-dialog></selection-dialog>
</div>
<task-bar></task-bar>`);
</script>
</body>
</html>
